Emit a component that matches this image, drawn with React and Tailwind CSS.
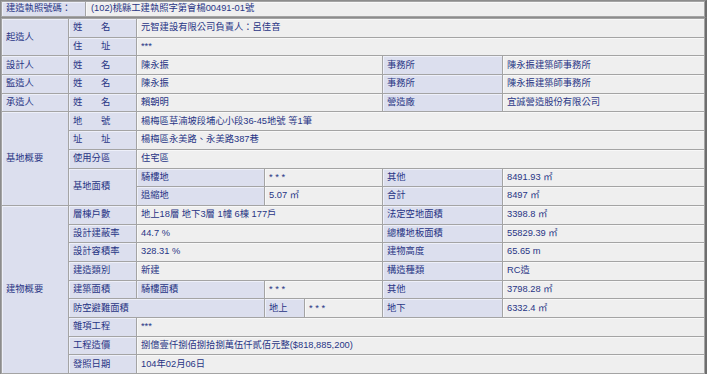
const L = ({ children, className = '' }) => (
  <div className={`flex items-center bg-[#dcdfee] shadow-[inset_1px_1px_0_#eef0fa] px-[4px] whitespace-nowrap ${className}`}>{children}</div>
)

const V = ({ children, className = '' }) => (
  <div className={`flex items-center bg-[#efefef] shadow-[inset_1px_1px_0_#f8f8f8] px-[4px] whitespace-nowrap ${className}`}>{children}</div>
)

const App = () => {
  return (
    <div className="w-[720px] h-[374px] overflow-hidden bg-white font-['Liberation_Sans','Noto_Sans_CJK_TC',sans-serif] text-[9.3px] leading-none text-[#283585]">
      {/* permit number */}
      <div className="w-[707px] h-[18px] border border-[#8c8c8c] border-r-2 border-r-[#6e6e6e] bg-[#a4a4a4] p-px grid grid-cols-[83px_1fr] gap-px">
        <L>建造執照號碼：</L>
        <V className="pl-[5px]">(102)桃縣工建執照字第會楊00491-01號</V>
      </div>

      {/* details */}
      <div className="w-[707px] border border-t-0 border-[#8c8c8c] border-r-2 border-r-[#6e6e6e] bg-[#a4a4a4] p-px grid grid-cols-[66px_67px_127px_39px_77px_119px_201px] auto-rows-[17.7px] gap-px">
        <L className="row-span-2">起造人</L>
        <L>姓　　名</L>
        <V className="col-span-5">元智建設有限公司負責人：呂佳音</V>
        <L>住　　址</L>
        <V className="col-span-5">***</V>

        <L>設計人</L>
        <L>姓　　名</L>
        <V className="col-span-3">陳永振</V>
        <L>事務所</L>
        <V>陳永振建築師事務所</V>

        <L>監造人</L>
        <L>姓　　名</L>
        <V className="col-span-3">陳永振</V>
        <L>事務所</L>
        <V>陳永振建築師事務所</V>

        <L>承造人</L>
        <L>姓　　名</L>
        <V className="col-span-3">賴朝明</V>
        <L>營造廠</L>
        <V>宜誠營造股份有限公司</V>

        <L className="row-span-5">基地概要</L>
        <L>地　　號</L>
        <V className="col-span-5">楊梅區草湳坡段埔心小段36-45地號 等1筆</V>
        <L>址　　址</L>
        <V className="col-span-5">楊梅區永美路、永美路387巷</V>
        <L>使用分區</L>
        <V className="col-span-5">住宅區</V>
        <L className="row-span-2">基地面積</L>
        <L>騎樓地</L>
        <V className="col-span-2">* * *</V>
        <L>其他</L>
        <V>8491.93 ㎡</V>
        <L>退縮地</L>
        <V className="col-span-2">5.07 ㎡</V>
        <L>合計</L>
        <V>8497 ㎡</V>

        <L className="row-span-9">建物概要</L>
        <L>層棟戶數</L>
        <V className="col-span-3">地上18層 地下3層 1幢 6棟 177戶</V>
        <L>法定空地面積</L>
        <V>3398.8 ㎡</V>
        <L>設計建蔽率</L>
        <V className="col-span-3">44.7 %</V>
        <L>總樓地板面積</L>
        <V>55829.39 ㎡</V>
        <L>設計容積率</L>
        <V className="col-span-3">328.31 %</V>
        <L>建物高度</L>
        <V>65.65 m</V>
        <L>建造類別</L>
        <V className="col-span-3">新建</V>
        <L>構造種類</L>
        <V>RC造</V>
        <L>建築面積</L>
        <L>騎樓面積</L>
        <V className="col-span-2">* * *</V>
        <L>其他</L>
        <V>3798.28 ㎡</V>
        <L className="col-span-2">防空避難面積</L>
        <L>地上</L>
        <V>* * *</V>
        <L>地下</L>
        <V>6332.4 ㎡</V>
        <L>雜項工程</L>
        <V className="col-span-5">***</V>
        <L>工程造價</L>
        <V className="col-span-5">捌億壹仟捌佰捌拾捌萬伍仟貳佰元整($818,885,200)</V>
        <L>發照日期</L>
        <V className="col-span-5">104年02月06日</V>
      </div>
    </div>
  )
}

export default App
